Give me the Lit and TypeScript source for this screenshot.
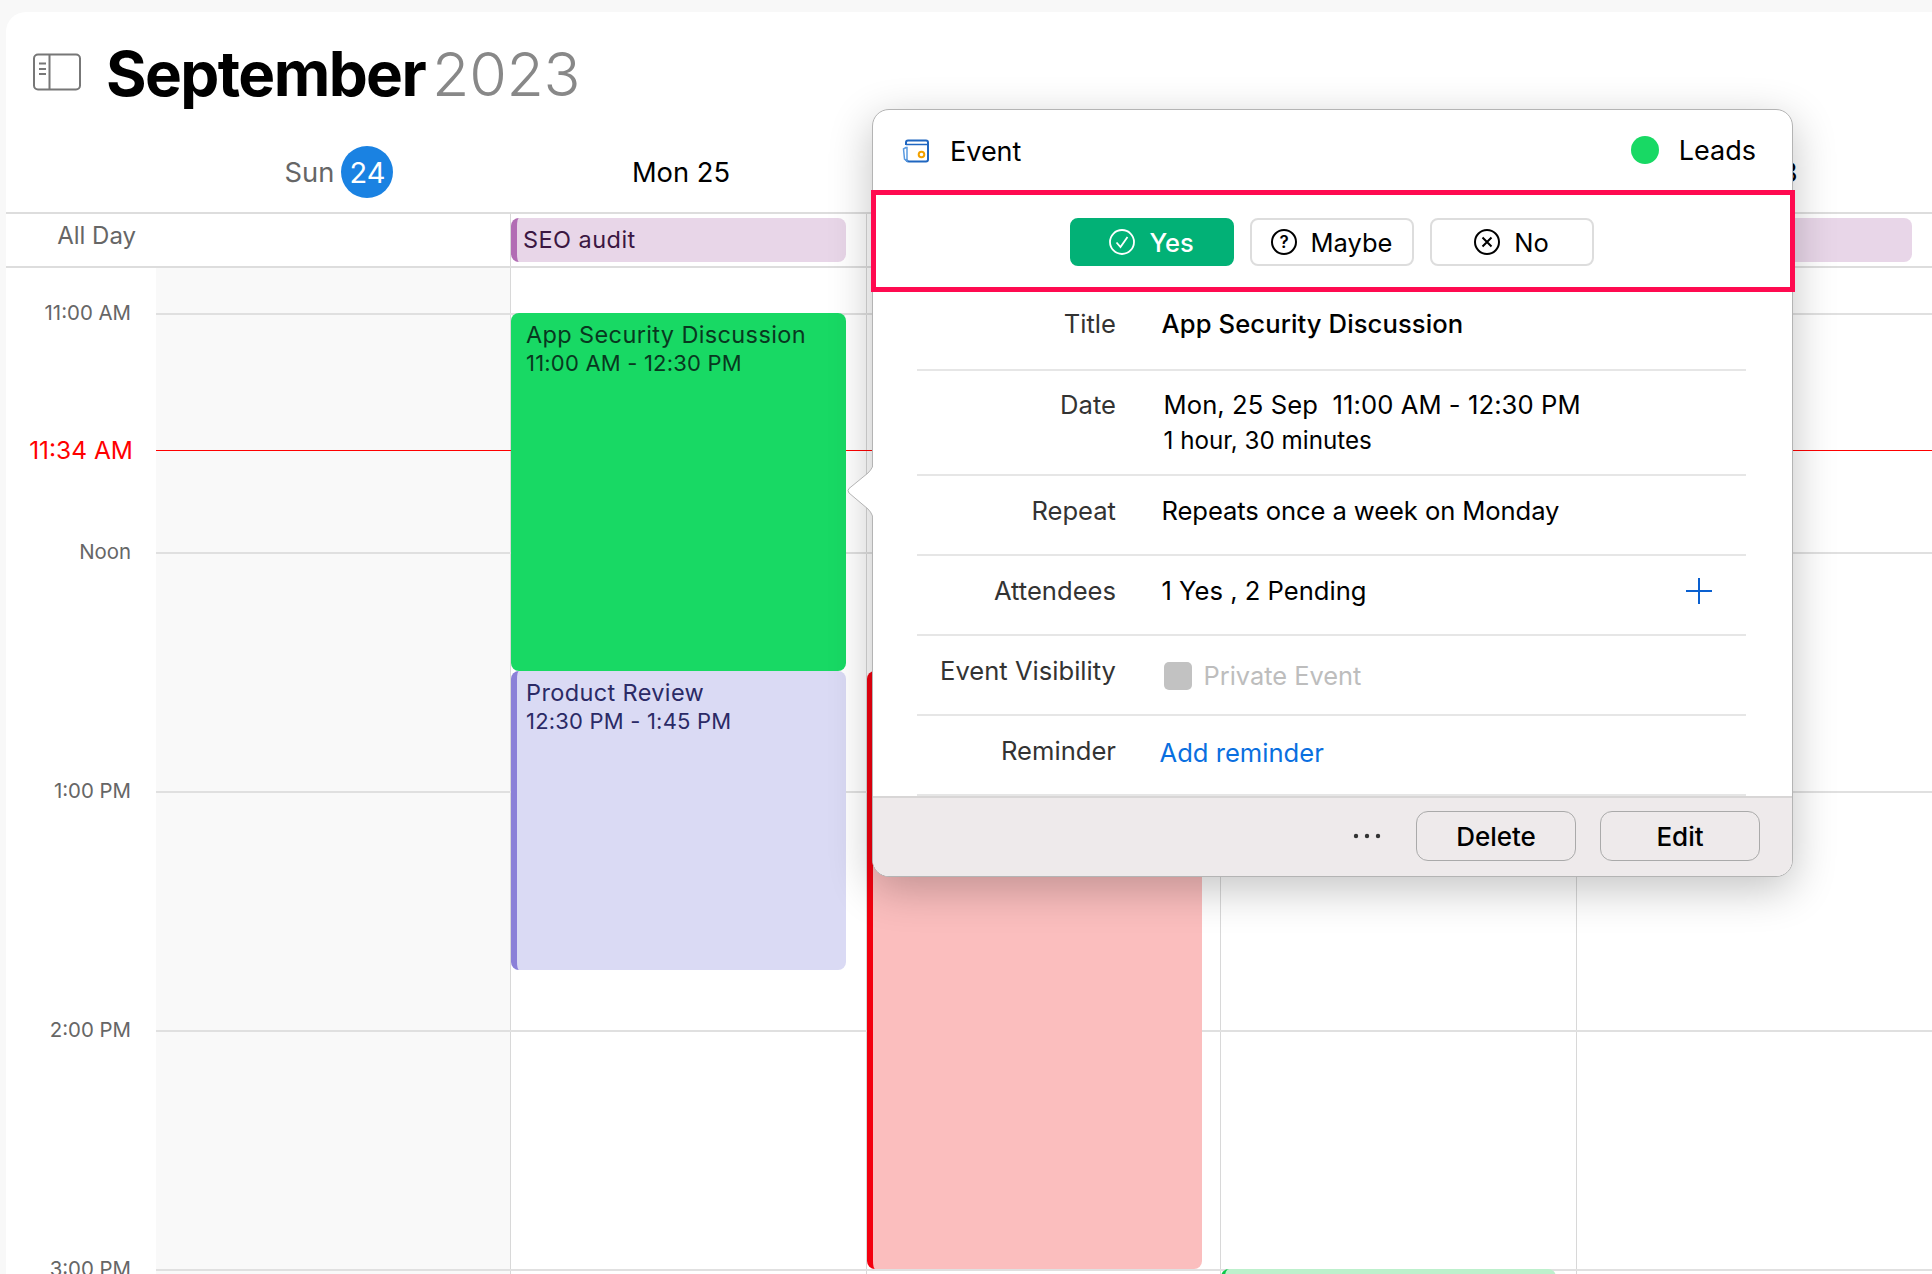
import { LitElement, html, css } from "lit";
import { customElement } from "lit/decorators.js";

const HOUR = 239.2;
const FIRST_HOUR = 11;
const TIMELINE_OFFSET = 44.5;
const y = (h: number) => TIMELINE_OFFSET + (h - FIRST_HOUR) * HOUR;

const hours = [
  { h: 11, label: "11:00 AM" },
  { h: 12, label: "Noon" },
  { h: 13, label: "1:00 PM" },
  { h: 14, label: "2:00 PM" },
  { h: 15, label: "3:00 PM" },
];
const NOW = 11.575;

@customElement("app-root")
export class AppRoot extends LitElement {
  static styles = css`
    :host {
      display: block;
      width: 1932px;
      height: 1274px;
      overflow: hidden;
      background: #f8f8f8;
      font-family: Inter, "Liberation Sans", sans-serif;
      color: #000;
    }
    .page {
      position: relative;
      width: 1932px;
      height: 1274px;
      padding: 12px 0 0 6px;
      box-sizing: border-box;
      overflow: hidden;
    }
    .card {
      background: #fff;
      border-top-left-radius: 20px;
      height: 1262px;
      overflow: hidden;
    }
    .titlebar {
      display: flex;
      align-items: center;
      height: 100px;
      padding: 20px 0 0 26px;
      box-sizing: border-box;
    }
    .side-icon { width: 50px; height: 39px; flex: none; }
    .month {
      margin: 3px 0 0 24px;
      font-size: 62px;
      font-weight: 700;
      letter-spacing: -1.6px;
      line-height: 70px;
    }
    .year {
      margin: 3px 0 0 7px;
      font-size: 61px;
      font-weight: 300;
      letter-spacing: -0.4px;
      line-height: 70px;
      color: #888;
    }
    .grid {
      display: grid;
      grid-template-columns: 150px 354px 356px 354px 356px 1fr;
    }
    .days {
      border-bottom: 2px solid #ddd;
      height: 100px;
      box-sizing: content-box;
    }
    .day {
      display: flex;
      align-items: center;
      justify-content: center;
      gap: 7px;
      height: 100px;
      padding: 20px 14px 0 0;
      box-sizing: border-box;
      font-size: 27.3px;
    }
    .day.today { color: #666; padding: 20px 0 0 12px; }
    .day.thu { padding-right: 4px; }
    .badge {
      width: 52px;
      height: 52px;
      border-radius: 50%;
      background: #1a82e2;
      color: #fff;
      display: flex;
      align-items: center;
      justify-content: center;
      font-size: 29px;
    }
    .allday {
      height: 52px;
      border-bottom: 2px solid #ddd;
    }
    .allday-label {
      font-size: 24px;
      color: #666;
      text-align: right;
      padding: 7px 20px 0 0;
      box-sizing: border-box;
      width: 150px;
    }
    .allday-cell {
      border-left: 1px solid #d8d8d8;
      padding-top: 4px;
      min-width: 0;
    }
    .allday-cell.sun { border-left: none; }
    .pill {
      width: 335px;
      height: 44px;
      box-sizing: border-box;
      background: #e8d6e8;
      border-left: 6px solid #b26db4;
      border-radius: 8px;
      color: #3b1742;
      font-size: 23.5px;
      letter-spacing: 0.45px;
      line-height: 44px;
      padding-left: 6px;
    }
    .timeline {
      position: relative;
      height: 1006px;
    }
    .gutter { position: relative; }
    .col {
      position: relative;
      border-left: 1px solid #d8d8d8;
      height: 1006px;
    }
    .col.sun { background: #f9f9f9; border-left: none; }
    .hour-line {
      position: absolute;
      left: 150px;
      right: 0;
      height: 2px;
      background: #e0e0e0;
      z-index: 1;
    }
    .now-line {
      position: absolute;
      left: 150px;
      right: 0;
      height: 1px;
      background: #f00;
      z-index: 1;
    }
    .time {
      position: absolute;
      right: 25px;
      transform: translateY(-50%);
      margin-top: -1px;
      font-size: 20.4px;
      color: #666;
      white-space: nowrap;
    }
    .time.now {
      right: 23px;
      margin-top: 0;
      font-size: 24.5px;
      color: #f00;
    }
    .event {
      position: absolute;
      left: 0;
      width: 335px;
      box-sizing: border-box;
      border-radius: 8px;
      z-index: 2;
      font-size: 23.5px;
      line-height: 28px;
      padding: 8px 0 0 15px;
    }
    .event .t { white-space: nowrap; letter-spacing: 0.37px; }
    .event .s { font-size: 22px; letter-spacing: 0.2px; white-space: nowrap; }
    .green { background: #18d964; color: #08381f; }
    .violet {
      background: #dadaf4;
      border-left: 6px solid #8b80d8;
      padding-left: 9px !important;
      color: #2b2a66;
    }
    .red { background: #fbbebe; border-left: 6px solid #f3000f; }
    .mint { background: #bdf0cc; border-left: 4px solid #0bc84a; }

    .popup {
      position: absolute;
      left: 872px;
      top: 109px;
      width: 921px;
      height: 768px;
      box-sizing: border-box;
      background: #fff;
      border: 1px solid #b4b4b4;
      border-radius: 17px;
      box-shadow: 0 12px 44px rgba(0, 0, 0, 0.24);
      z-index: 5;
      display: flex;
      flex-direction: column;
    }
    .arrow {
      position: absolute;
      left: -26px;
      top: 352px;
      width: 28px;
      height: 60px;
    }
    .pop-head {
      height: 80px;
      display: flex;
      align-items: center;
      padding: 2px 36px 0 29px;
      box-sizing: border-box;
      flex: none;
      font-size: 27px;
    }
    .ev-icon { width: 28px; height: 24px; flex: none; }
    .ev-label { margin-left: 20px; }
    .spacer { flex: 1; }
    .dot {
      width: 28px;
      height: 28px;
      border-radius: 50%;
      background: #18d964;
      flex: none;
      margin-top: -2px;
    }
    .cal-name { margin: -2px 0 0 20px; }
    .rsvp {
      flex: none;
      height: 102px;
      margin: 0 -3px 0 -2px;
      border: 5px solid #ff0a50;
      box-sizing: border-box;
      display: flex;
      justify-content: center;
      gap: 16px;
      padding: 23px 2px 0 0;
    }
    .rsvp-btn {
      width: 164px;
      height: 48px;
      box-sizing: border-box;
      border: 2px solid #ddd;
      border-radius: 8px;
      background: #fff;
      display: flex;
      align-items: center;
      justify-content: center;
      gap: 13px;
      padding-right: 2px;
      font-size: 25.5px;
    }
    .rsvp-btn.on {
      background: #02b176;
      border-color: #02b176;
      color: #fff;
      font-weight: 500;
    }
    .rsvp-btn svg { width: 28px; height: 28px; flex: none; }
    .rows { flex: 1; min-height: 0; padding: 0 46px 0 44px; }
    .row {
      display: grid;
      grid-template-columns: 199px 1fr auto;
      column-gap: 45.5px;
      border-bottom: 2px solid #e6e6e6;
      box-sizing: border-box;
      height: 80px;
      padding-top: 19px;
      font-size: 25.6px;
      line-height: 32px;
    }
    .row.title { height: 79px; padding-top: 16px; }
    .row.date { height: 105px; padding-top: 18px; }
    .label { text-align: right; color: #333; white-space: nowrap; }
    .val { white-space: pre; }
    .val.strong { font-weight: 500; letter-spacing: 0.1px; }
    .val.tight { letter-spacing: -0.1px; }
    .date-val { padding-left: 2px; letter-spacing: 0.08px; }
    .sub { font-size: 24.2px; line-height: 40px; letter-spacing: 0; }
    .plus { width: 28px; height: 28px; margin: 2px 33px 0 0; }
    .check-wrap {
      display: flex;
      align-items: center;
      align-self: start;
      gap: 12px;
      margin-top: 5px;
      padding-left: 2px;
      color: #bdbdbd;
      font-size: 25.4px;
    }
    .check {
      width: 28px;
      height: 28px;
      background: #c2c2c2;
      border-radius: 5px;
    }
    .link { color: #0a6fe0; margin: 2px 0 0 -2px; }
    .foot {
      flex: none;
      height: 80px;
      box-sizing: border-box;
      border-top: 2px solid #d8d6d6;
      background: #eeeaeb;
      border-radius: 0 0 16px 16px;
      display: flex;
      align-items: center;
      justify-content: flex-end;
      padding: 0 32px 2px 0;
      gap: 24px;
    }
    .more { width: 30px; height: 8px; margin-right: 10px; }
    .fbtn {
      width: 160px;
      height: 50px;
      box-sizing: border-box;
      border: 1px solid #aaa;
      border-radius: 12px;
      display: flex;
      align-items: center;
      justify-content: center;
      font-size: 26px;
      font-weight: 500;
    }
  `;

  render() {
    return html`
      <div class="page">
        <div class="card">
          <div class="titlebar">
            <svg class="side-icon" viewBox="0 0 50 39" fill="none" stroke="#777" stroke-width="2">
              <rect x="2" y="1.5" width="46" height="35" rx="4"></rect>
              <path d="M17.5 1.5v35"></path>
              <path d="M7 10.5h7M7 16h7M7 21h7"></path>
            </svg>
            <span class="month">September</span><span class="year">2023</span>
          </div>
          <div class="grid days">
            <div></div>
            <div class="day today"><span>Sun</span><span class="badge">24</span></div>
            <div class="day">Mon 25</div>
            <div></div>
            <div></div>
            <div class="day thu">Thu 28</div>
          </div>
          <div class="grid allday">
            <div class="allday-label">All Day</div>
            <div class="allday-cell sun"></div>
            <div class="allday-cell"><div class="pill">SEO audit</div></div>
            <div class="allday-cell"></div>
            <div class="allday-cell"></div>
            <div class="allday-cell"><div class="pill"></div></div>
          </div>
          <div class="grid timeline">
            ${hours.map(
              (h) => html`<div class="hour-line" style="top:${y(h.h)}px"></div>`
            )}
            <div class="now-line" style="top:${y(NOW)}px"></div>
            <div class="gutter">
              ${hours.map(
                (h) => html`<div class="time" style="top:${y(h.h)}px">${h.label}</div>`
              )}
              <div class="time now" style="top:${y(NOW)}px">11:34 AM</div>
            </div>
            <div class="col sun"></div>
            <div class="col">
              ${this.event("green", 11, 12.5, "App Security Discussion", "11:00 AM - 12:30 PM")}
              ${this.event("violet", 12.5, 13.75, "Product Review", "12:30 PM - 1:45 PM")}
            </div>
            <div class="col">${this.event("red", 12.5, 15)}</div>
            <div class="col">${this.event("mint", 15, 16)}</div>
            <div class="col"></div>
          </div>
        </div>
        ${this.popup()}
      </div>
    `;
  }

  event(kind: string, from: number, to: number, title = "", sub = "") {
    const top = y(from);
    const height = (to - from) * HOUR;
    return html`<div class="event ${kind}" style="top:${top}px;height:${height}px">
      ${title ? html`<div class="t">${title}</div><div class="s">${sub}</div>` : ""}
    </div>`;
  }

  popup() {
    return html`
      <div class="popup">
        <svg class="arrow" viewBox="0 0 28 60">
          <path d="M27 0C26 4 25 7 21 11L2 26.5Q0 28.5 2 31L21 47C25 51 26 55 27 60Z" fill="#fff" stroke="#b4b4b4" stroke-width="1"></path>
          <rect x="26" y="0" width="3" height="60" fill="#fff"></rect>
        </svg>
        <div class="pop-head">
          <svg class="ev-icon" viewBox="0 0 28 24" fill="none">
            <path d="M4 6V3.5Q4 1.5 6 1.5H24Q26 1.5 26 3.5V20.5Q26 22.5 24 22.5H7Q4.5 22.5 4 20" stroke="#1f66c0" stroke-width="2"></path>
            <path d="M4 5.5H26" stroke="#1f66c0" stroke-width="1.5"></path>
            <path d="M4 8.5L1.5 10L2.5 20L5 22V8.5Z" stroke="#5a9ae0" stroke-width="1.5"></path>
            <circle cx="19.5" cy="15.5" r="2.8" stroke="#f2a100" stroke-width="2"></circle>
          </svg>
          <span class="ev-label">Event</span>
          <span class="spacer"></span>
          <span class="dot"></span>
          <span class="cal-name">Leads</span>
        </div>
        <div class="rsvp">
          <div class="rsvp-btn on">
            <svg viewBox="0 0 28 28" fill="none" stroke="#fff" stroke-width="1.8">
              <circle cx="14" cy="14" r="12"></circle>
              <path d="M8.5 14.5l4 4.5 7-10"></path>
            </svg>
            <span>Yes</span>
          </div>
          <div class="rsvp-btn">
            <svg viewBox="0 0 28 28" fill="none" stroke="#000" stroke-width="2">
              <circle cx="14" cy="14" r="12"></circle>
              <text x="14" y="20" text-anchor="middle" font-size="17" font-weight="600" fill="#000" stroke="none" font-family="Inter">?</text>
            </svg>
            <span>Maybe</span>
          </div>
          <div class="rsvp-btn">
            <svg viewBox="0 0 28 28" fill="none" stroke="#000" stroke-width="2">
              <circle cx="14" cy="14" r="12"></circle>
              <path d="M9.5 9.5l9 9M18.5 9.5l-9 9"></path>
            </svg>
            <span>No</span>
          </div>
        </div>
        <div class="rows">
          <div class="row title">
            <div class="label">Title</div>
            <div class="val strong">App Security Discussion</div>
          </div>
          <div class="row date">
            <div class="label">Date</div>
            <div class="val date-val">Mon, 25 Sep  11:00 AM - 12:30 PM<div class="sub">1 hour, 30 minutes</div></div>
          </div>
          <div class="row">
            <div class="label">Repeat</div>
            <div class="val tight">Repeats once a week on Monday</div>
          </div>
          <div class="row">
            <div class="label">Attendees</div>
            <div class="val">1 Yes , 2 Pending</div>
            <svg class="plus" viewBox="0 0 28 28" stroke="#0a60d0" stroke-width="2"><path d="M14 1v26M1 14h26"></path></svg>
          </div>
          <div class="row">
            <div class="label">Event Visibility</div>
            <div class="val check-wrap"><span class="check"></span><span>Private Event</span></div>
          </div>
          <div class="row">
            <div class="label">Reminder</div>
            <div class="val link">Add reminder</div>
          </div>
        </div>
        <div class="foot">
          <svg class="more" viewBox="0 0 30 8" fill="#333">
            <circle cx="4" cy="4" r="2.2"></circle><circle cx="15" cy="4" r="2.2"></circle><circle cx="26" cy="4" r="2.2"></circle>
          </svg>
          <div class="fbtn">Delete</div>
          <div class="fbtn">Edit</div>
        </div>
      </div>
    `;
  }
}
